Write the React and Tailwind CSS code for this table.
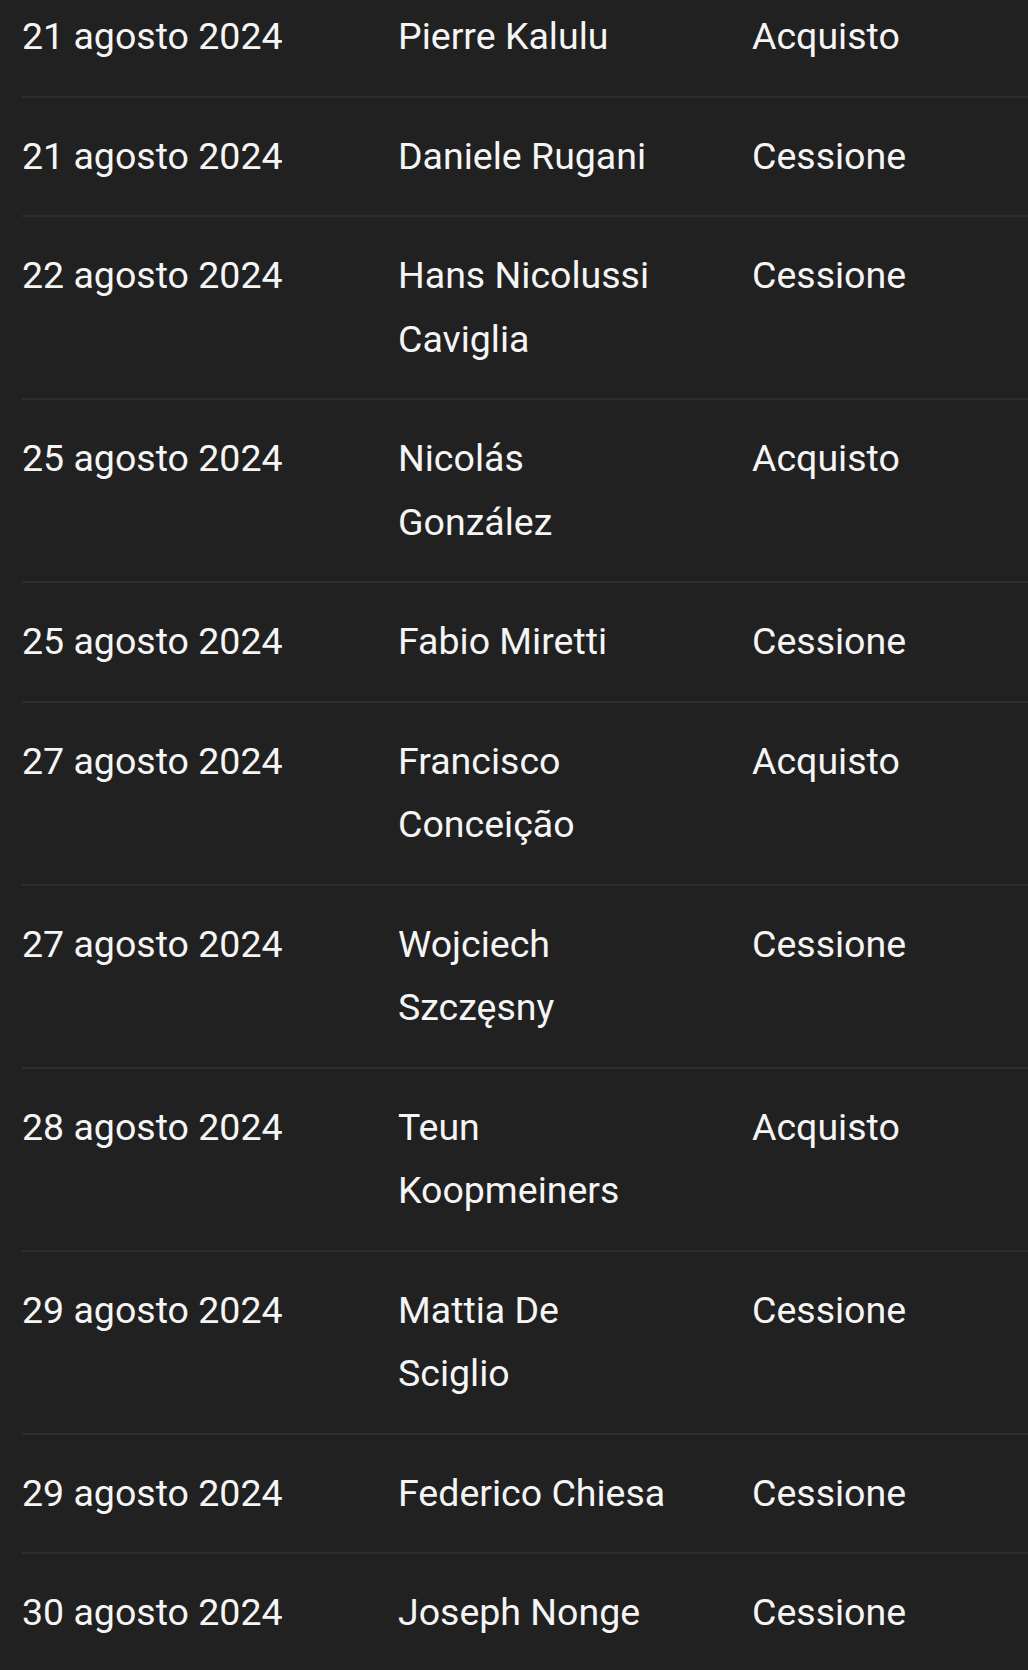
const transfers = [
  { date: '21 agosto 2024', name: 'Pierre Kalulu', type: 'Acquisto' },
  { date: '21 agosto 2024', name: 'Daniele Rugani', type: 'Cessione' },
  { date: '22 agosto 2024', name: 'Hans Nicolussi Caviglia', type: 'Cessione' },
  { date: '25 agosto 2024', name: 'Nicolás González', type: 'Acquisto' },
  { date: '25 agosto 2024', name: 'Fabio Miretti', type: 'Cessione' },
  { date: '27 agosto 2024', name: 'Francisco Conceição', type: 'Acquisto' },
  { date: '27 agosto 2024', name: 'Wojciech Szczęsny', type: 'Cessione' },
  { date: '28 agosto 2024', name: 'Teun Koopmeiners', type: 'Acquisto' },
  { date: '29 agosto 2024', name: 'Mattia De Sciglio', type: 'Cessione' },
  { date: '29 agosto 2024', name: 'Federico Chiesa', type: 'Cessione' },
  { date: '30 agosto 2024', name: 'Joseph Nonge', type: 'Cessione' },
]

export default function App() {
  return (
    <div
      className="min-h-[1670px] bg-[#212121] text-[#f5f5f5] overflow-hidden"
      style={{ fontFamily: 'Roboto, "Noto Sans", sans-serif' }}
    >
      <div className="-mt-[22px] pl-[22px]">
        {transfers.map((t, i) => (
          <div
            key={i}
            className="grid grid-cols-[376px_354px_1fr] border-b-2 border-[#2e2e2e] py-[27px] text-[37.5px] leading-[63.5px]"
          >
            <div>{t.date}</div>
            <div className="pr-[80px]">{t.name}</div>
            <div>{t.type}</div>
          </div>
        ))}
      </div>
    </div>
  )
}
